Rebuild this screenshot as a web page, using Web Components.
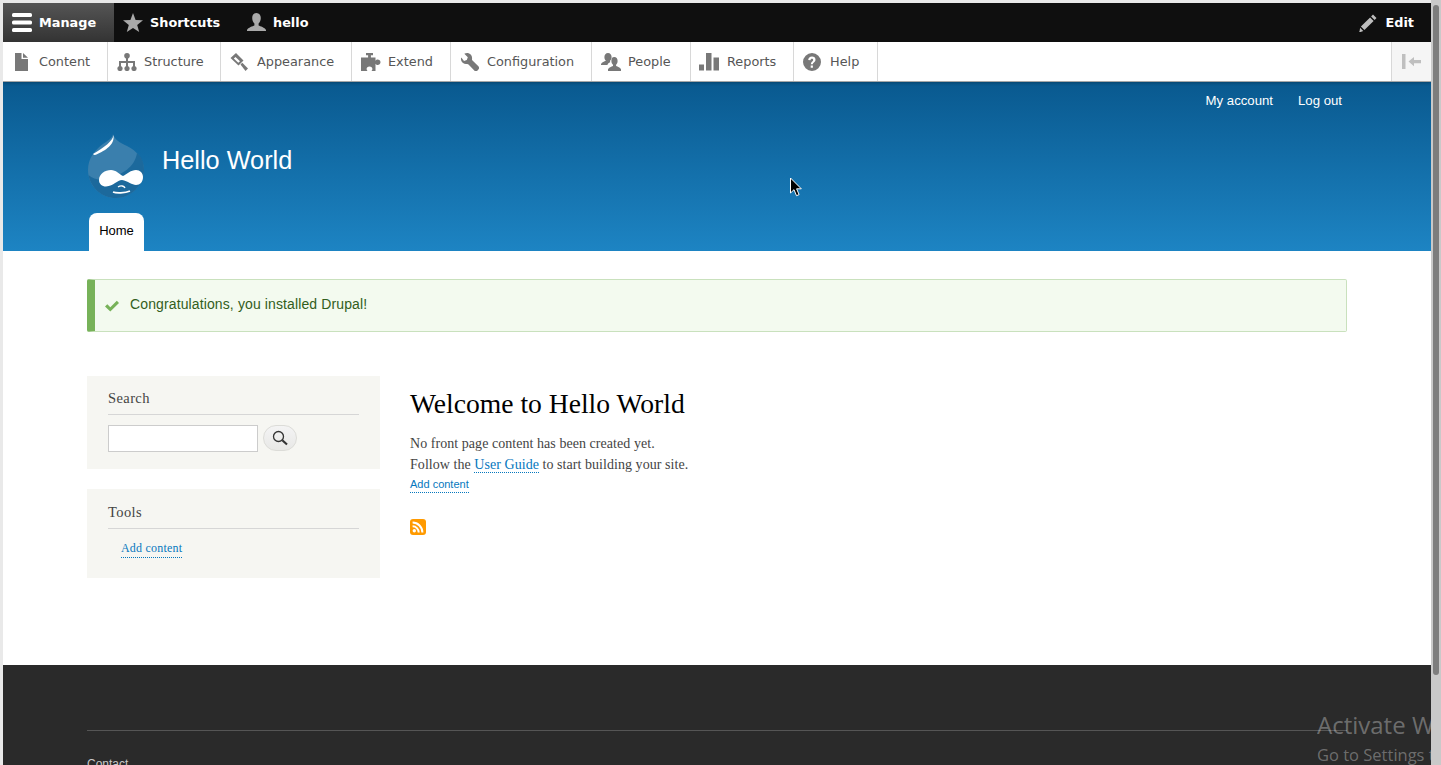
<!DOCTYPE html>
<html lang="en">
<head>
<meta charset="utf-8">
<title>Hello World</title>
<style>
  html, body { margin: 0; height: 100%; overflow: hidden; background: #e9e9e9; }
  body { font-family: "Liberation Serif", serif; }
</style>
</head>
<body>
<app-frame>
  <admin-toolbar></admin-toolbar>
  <site-header name="Hello World"></site-header>
  <status-message>Congratulations, you installed Drupal!</status-message>
  <page-columns>
    <side-block slot="side" title="Search"><search-form></search-form></side-block>
    <side-block slot="side" title="Tools" style="padding-top:14px"><tools-menu></tools-menu></side-block>
    <front-content></front-content>
  </page-columns>
  <site-footer></site-footer>
</app-frame>
<screen-overlay></screen-overlay>

<script>
// small helper, every element is just a template string in an open shadow root
class Base extends HTMLElement {
    constructor() {
        super();
        this.attachShadow({ mode: 'open' });
        this.shadowRoot.innerHTML = this.markup();
    }
    markup() { return ''; }
}

const ICONS = {
    menu: '<rect x="0" y="0" width="20" height="4" rx="1.6"/><rect x="0" y="7.5" width="20" height="4" rx="1.6"/><rect x="0" y="15" width="20" height="4" rx="1.6"/>',
    star: '<path d="M10 0l2.6 6.9 7.4.4-5.8 4.6 2 7.1L10 15l-6.2 4 2-7.1L0 7.3l7.4-.4z"/>',
    user: '<path d="M9.5 0c2.8 0 4.3 2.2 4.3 5 0 2.4-1 4.4-2.2 5.4v2.2c1.600.7 6.200 2 7.400 4.400v1H0v-1c1.200-2.400 5.800-3.700 7.400-4.400v-2.200C6.200 9.400 5.200 7.400 5.200 5c0-2.800 1.500-5 4.300-5z"/>',
    edit: '<path d="M14 0.500l3.500 3.500-1.900 1.900-3.500-3.500z M11.100 3.400l3.500 3.500-9.200 9.200-3.500-3.500z M1.100 13.700l3.200 3.200-2.700 1-1.100.6-.4-.4.500-1.100z"/>',
    content: '<path d="M1 0h6.500v6H14v12H1z M9 0l5 4.700H9z"/>',
    structure: '<circle cx="10" cy="2.800" r="2.800"/><rect x="9" y="3" width="2" height="8"/><rect x="3" y="8" width="14" height="2"/><rect x="2" y="8" width="2" height="6"/><rect x="16" y="8" width="2" height="6"/><rect x="9" y="8" width="2" height="6"/><circle cx="3" cy="15.500" r="2.600"/><circle cx="10" cy="15.500" r="2.600"/><circle cx="17" cy="15.500" r="2.600"/>',
    appearance: '<path fill-rule="evenodd" d="M6 0l7.500 7.500-5 5-8-7.500zM5.500 4L3.800 5.500l4.500 4.300L10 8.200z"/><path d="M10.500 11.500l1.800-1.800 5.700 5.700-2.500 2.500z"/>',
    extend: '<path d="M5 0h7v2.200H9.900V4.500H14.500v3.200c.6-.9 1.400-1.200 2.100-1.200 1.500 0 2.900 1.100 2.900 2.700s-1.400 2.700-2.900 2.700c-.7 0-1.500-.3-2.100-1.200V18h-4c.6-.6.9-1.400.9-2.100 0-1.500-1.100-2.400-2.900-2.400s-2.900.9-2.900 2.400c0 .7.300 1.500.9 2.100H0V4.500h7.100V2.200H5z"/>',
    config: '<path d="M6.300 0c-1.100 0-2.200.300-3 .8l3.500 3.400-1 2.800-2.800 1L.3 4.500C-.2 5.400-.1 6.600.2 7.600c.8 2.500 3.300 3.900 5.800 3.400.5-.1 1.200.200 1.500.500l5.800 5.900c.9.900 2.300.9 3.200 0l.9-.9c.9-.9.9-2.300 0-3.200l-5.900-5.800c-.3-.3-.6-1-.5-1.500C11.500 3.400 10 .9 7.600.2 7.100 0 6.700 0 6.300 0z"/>',
    people: '<path d="M7 0c2.200 0 3.600 1.800 3.600 4 0 1.600-.7 3-1.500 3.800v1.500c-1.300.6-2.200 1.400-2.700 2.700H0v-1c1-1.900 3.300-2.500 4.900-3.200V7.800C4 7 3.400 5.600 3.400 4 3.400 1.800 4.800 0 7 0z"/><path d="M13.200 4c2.100 0 3.400 1.700 3.400 3.900 0 1.600-.7 3-1.500 3.800v1.400c1.700.7 4 1.300 4.900 3.200V18H7v-1.700c1-1.900 3.300-2.500 5-3.200v-1.400c-.9-.8-1.600-2.200-1.600-3.800C10.400 5.700 11.100 4 13.200 4z"/>',
    reports: '<rect x="0" y="11.500" width="5" height="6"/><rect x="7" y="0" width="5.500" height="17.500"/><rect x="14.500" y="4.500" width="5.500" height="13"/>',
    help: '<path fill-rule="evenodd" d="M9 0a9 9 0 1 0 0 18A9 9 0 0 0 9 0z M9.900 14.700H7.700v-2.200h2.200z M9.900 11.300H7.800c0-2.600 2.400-3 2.400-4.400 0-.8-.5-1.200-1.300-1.200-.9 0-1.400.6-1.500 1.500l-2.200-.2C5.400 5 6.800 3.600 9 3.600c2.100 0 3.500 1.200 3.500 3.200 0 2.300-2.600 2.700-2.600 4.500z"/>',
    collapse: '<rect x="0" y="0" width="3.500" height="15"/><path d="M6.500 7.500L12 3v3h7v3.200h-7v3z"/>'
};

function icon(name, w, h, vb) {
    return `<svg width="${w}" height="${h}" viewBox="0 0 ${vb}" fill="currentColor" aria-hidden="true">${ICONS[name]}</svg>`;
}

class AppFrame extends Base {
    markup() {
        return `<style>
            :host { display: flex; width: 1441px; height: 765px; box-sizing: border-box; padding: 3px 0 0 3px; overflow: hidden; }
            .page { flex: 1; min-width: 0; height: 762px; overflow: hidden; background: #fff; display: flex; flex-direction: column; }
        </style>
        <div class="page"><slot></slot></div>
        <page-scrollbar></page-scrollbar>`;
    }
}

class PageScrollbar extends Base {
    markup() {
        return `<style>
            :host { display: block; flex: none; width: 10px; height: 760px; margin-top: -3px; padding-top: 5px; background: #c9c9c9; position: relative; z-index: 3; }
            div { width: 6px; height: 670px; margin: 0 2px; background: #7d7d7d; border-radius: 3px; }
        </style><div></div>`;
    }
}

class AdminToolbar extends Base {
    markup() {
        const tray = [
            ['content', 'Content', 15, 18, '15 18', 11, 105],
            ['structure', 'Structure', 20, 18, '20 18', 9, 113],
            ['appearance', 'Appearance', 18, 18, '18 18', 9, 131],
            ['extend', 'Extend', 20, 18, '20 18', 9, 99],
            ['config', 'Configuration', 20, 18, '18 18', 9, 141],
            ['people', 'People', 20, 18, '20 18', 9, 99],
            ['reports', 'Reports', 20, 18, '20 18', 8, 103],
            ['help', 'Help', 18, 18, '18 18', 9, 84]
        ].map(([n, label, w, h, vb, left, width]) =>
            `<a class="item" style="width:${width}px"><span class="ic" style="padding-left:${left}px">${icon(n, w, h, vb)}</span>${label}</a>`
        ).join('');
        return `<style>
            :host { display: block; font-family: "DejaVu Sans", sans-serif; flex: none; position: relative; z-index: 2; }
            svg { display: block; flex: none; }
            .bar { height: 39px; background: #0f0f0f; color: #fff; display: flex; font-size: 12.850px; font-weight: 700; }
            .tab { display: flex; align-items: center; padding: 0 9px; color: #fff; }
            .tab svg { color: #a9a9a9; margin-right: 7px; }
            .tab.manage { width: 111px; box-sizing: border-box; background: linear-gradient(#555, #333); }
            .tab.manage svg { color: #fff; }
            .tab.shortcuts { width: 124px; box-sizing: border-box; }
            .tab.user { padding-left: 9px; }
            .tab.edit { margin-left: auto; padding: 0 17px 0 0; }
            .tab.edit svg { margin-right: 8px; color: #bdbdbd; }
            .tray { height: 39px; background: #fff; display: flex; border-bottom: 1px solid #a7a7a7; color: #565656; font-size: 12.850px; box-shadow: 0 1px 3px rgba(0,0,0,.25); }
            .item { display: flex; align-items: center; box-sizing: border-box; flex: none; border-right: 1px solid #d8d8d8; white-space: nowrap; }
            .ic { display: flex; width: 36px; box-sizing: border-box; flex: none; color: #787878; }
            .toggle { margin-left: auto; width: 40px; box-sizing: border-box; display: flex; align-items: center; justify-content: center; background: #f5f5f5; border-left: 1px solid #d8d8d8; color: #bfbfbf; }
        </style>
        <div class="bar">
            <a class="tab manage">${icon('menu', 20, 19, '20 19')}Manage</a>
            <a class="tab shortcuts">${icon('star', 20, 19, '20 19')}Shortcuts</a>
            <a class="tab user">${icon('user', 19, 19, '19 19')}hello</a>
            <a class="tab edit">${icon('edit', 18, 18, '18 18')}Edit</a>
        </div>
        <div class="tray">${tray}<div class="toggle">${icon('collapse', 19, 15, '19 15')}</div></div>`;
    }
}

class SiteHeader extends Base {
    markup() {
        return `<style>
            :host { display: block; flex: none; height: 169px; box-sizing: border-box; padding: 0 89px 0 84px; background: linear-gradient(#09598f, #1d84c3); color: #fff; font-family: "Liberation Sans", sans-serif; }
            .account { display: flex; justify-content: flex-end; gap: 25px; font-size: 13.200px; line-height: 14px; padding-top: 12px; }
            .brand { display: flex; align-items: center; gap: 17px; margin-top: 26px; height: 64px; font-size: 25.300px; }
            .name { margin-top: -11px; }
            .home { display: block; width: 55px; height: 38px; box-sizing: border-box; margin: 15px 0 0 2px; padding-top: 11px; background: #fff; border-radius: 8px 8px 0 0; color: #000; font-size: 13px; line-height: 14px; text-align: center; }
            svg { display: block; flex: none; }
        </style>
        <nav class="account"><a>My account</a><a>Log out</a></nav>
        <div class="brand">
            <svg width="58" height="64" viewBox="0 0 58 64" aria-hidden="true">
                <path d="M26 0C27 5 33 9 40 12C50 17 57 25 57 36C57 51 44 64 29 64C13 64 1 51 1 36C1 24 8 16 16 10C20 7 25 5 26 0z" fill="#3a7fad"/>
                <path d="M50 19c6 5 7 12 7 17 0 15-13 28-28 28C15 64 4 54 1.500 41c5 5 15 6 22 3 11-4 24-10 26.500-25z" fill="#1c699c"/>
                <path d="M26.500 1c-.5 6-9 12-20.500 19 1 1.500 2.500 1 4 .3C18 16.500 28 11 26.500 1z" fill="#fff"/>
                <path d="M12 46C12 40 18 36 24 36C29 36 32 40 36 42C40 40 44 36 49 36C53 36 56 39 56 43C56 48 53 51 49 51C45 51 41 47 35 46C30 46 27 52 19 52.500C15 52.500 12 50 12 46z" fill="#fff"/>
                <path d="M26 58c3 1.300 12 1.300 17-1" fill="none" stroke="#fff" stroke-width="1.600"/>
                <path d="M31 53c3-2 6-1 7 1" fill="none" stroke="#fff" stroke-width="1.400"/>
            </svg>
            <span class="name">${this.getAttribute('name')}</span>
        </div>
        <a class="home">Home</a>`;
    }
}

class StatusMessage extends Base {
    markup() {
        return `<style>
            :host { display: flex; align-items: center; flex: none; height: 53px; box-sizing: border-box; width: 1260px; margin: 28px 0 0 84px; padding-left: 9px; border: 1px solid #c9e1bd; border-left: 8px solid #77b259; border-radius: 2px; background: #f3faef; color: #325e1c; font: 14px/20px "Liberation Sans", sans-serif; letter-spacing: .12px; }
            svg { margin-right: 10px; flex: none; }
            span { margin-bottom: 3px; }
        </style>
        <svg width="16" height="14" viewBox="0 0 16 14" aria-hidden="true"><path d="M1 7.500l2.300-2.300 3 3L12.800 1.800 15 4 6.300 12.600z" fill="#77b259"/></svg>
        <span><slot></slot></span>`;
    }
}

class PageColumns extends Base {
    markup() {
        return `<style>
            :host { display: flex; flex: none; height: 333px; box-sizing: border-box; padding: 44px 0 0 84px; gap: 30px; }
            .side { width: 293px; flex: none; display: flex; flex-direction: column; gap: 20px; }
        </style>
        <div class="side"><slot name="side"></slot></div>
        <slot></slot>`;
    }
}

class SideBlock extends Base {
    markup() {
        return `<style>
            :host { display: block; background: #f6f6f2; padding: 13px 21px 17px; color: #333; }
            h2 { margin: 0 0 10px; padding-bottom: 7px; border-bottom: 1px solid #d6d6d6; font: 400 14.500px/18px "Liberation Serif", serif; letter-spacing: .4px; color: #444; }
        </style>
        <h2>${this.getAttribute('title')}</h2>
        <slot></slot>`;
    }
}

class SearchForm extends Base {
    markup() {
        return `<style>
            :host { display: flex; gap: 5px; align-items: flex-start; }
            input { width: 150px; height: 27px; box-sizing: border-box; margin: 0; border: 1px solid #ccc; background: #fff; padding: 0 4px; }
            button { width: 34px; height: 26px; box-sizing: border-box; padding: 0; display: flex; align-items: center; justify-content: center; border: 1px solid #dcdcd8; border-radius: 13px; background: linear-gradient(#f4f4f4, #e8e8e6); color: #333; }
        </style>
        <input type="search" aria-label="Search">
        <button aria-label="Search"><svg width="16" height="16" viewBox="0 0 16 16" fill="none" stroke="currentColor" aria-hidden="true"><circle cx="6.500" cy="6.500" r="5" stroke-width="1.300"/><path d="M10.300 10.300l4.700 4.200" stroke-width="2.200"/></svg></button>`;
    }
}

class ToolsMenu extends Base {
    markup() {
        return `<style>
            :host { display: block; padding: 0 0 3px 13px; font: 12px/14px "Liberation Serif", serif; }
            a { display: inline-block; color: #0678be; border-bottom: 1px dotted #0678be; padding-bottom: 2px; margin-top: 2px; letter-spacing: .2px; }
        </style>
        <a>Add content</a>`;
    }
}

class FrontContent extends Base {
    markup() {
        return `<style>
            :host { display: block; color: #444; font: 14px/21px "Liberation Serif", serif; letter-spacing: .05px; }
            h1 { margin: 11px 0 12px; font: 400 27.600px/34px "Liberation Serif", serif; letter-spacing: 0; color: #000; }
            p { margin: 0; }
            a { color: #0678be; border-bottom: 1px dotted #0678be; }
            .add { display: inline-block; margin-top: 2px; font: 11px/14px "Liberation Sans", sans-serif; letter-spacing: 0; padding-bottom: 1px; vertical-align: top; }
            svg { display: block; margin-top: 23px; }
        </style>
        <h1>Welcome to Hello World</h1>
        <p>No front page content has been created yet.</p>
        <p>Follow the <a>User Guide</a> to start building your site.</p>
        <a class="add">Add content</a>
        <svg width="16" height="16" viewBox="0 0 16 16" aria-hidden="true">
            <rect width="16" height="16" rx="3" fill="#ff9a00"/>
            <circle cx="4.300" cy="11.700" r="1.700" fill="#fff"/>
            <path d="M2.600 7.300a6.100 6.100 0 0 1 6.100 6.100M2.600 3.600a9.800 9.800 0 0 1 9.800 9.800" fill="none" stroke="#fff" stroke-width="2"/>
        </svg>`;
    }
}

class SiteFooter extends Base {
    markup() {
        return `<style>
            :host { display: block; flex: 1; background: #2a2a2a; padding: 65px 84px 0; color: #c8c8c8; font: 12px/14px "Liberation Sans", sans-serif; }
            div { border-top: 1px solid #555; padding-top: 26px; width: 1260px; }
        </style>
        <div>Contact</div>`;
    }
}

// things that sit over the page: the mouse cursor and the windows watermark
class ScreenOverlay extends Base {
    markup() {
        return `<style>
            :host { position: absolute; inset: 0; pointer-events: none; overflow: hidden; z-index: 2; }
            svg { position: absolute; left: 789px; top: 177px; }
            .mark { position: absolute; left: 1317px; top: 709px; width: 114px; overflow: hidden; white-space: nowrap; color: rgba(255,255,255,.32); font-family: "Open Sans", sans-serif; }
            .big { font-size: 24px; line-height: 31px; }
            .small { font-size: 16.500px; line-height: 27px; margin-top: 1px; }
        </style>
        <svg width="14" height="20" viewBox="0 0 14 20" aria-hidden="true"><path d="M1.500 1v15l3.500-3.300 2.500 6 2.600-1.100-2.500-5.800h4.700z" fill="#000" stroke="#fff" stroke-width="1"/></svg>
        <div class="mark"><div class="big">Activate Windows</div><div class="small">Go to Settings to activate Windows.</div></div>`;
    }
}

customElements.define('app-frame', AppFrame);
customElements.define('page-scrollbar', PageScrollbar);
customElements.define('admin-toolbar', AdminToolbar);
customElements.define('site-header', SiteHeader);
customElements.define('status-message', StatusMessage);
customElements.define('page-columns', PageColumns);
customElements.define('side-block', SideBlock);
customElements.define('search-form', SearchForm);
customElements.define('tools-menu', ToolsMenu);
customElements.define('front-content', FrontContent);
customElements.define('site-footer', SiteFooter);
customElements.define('screen-overlay', ScreenOverlay);
</script>
</body>
</html>
